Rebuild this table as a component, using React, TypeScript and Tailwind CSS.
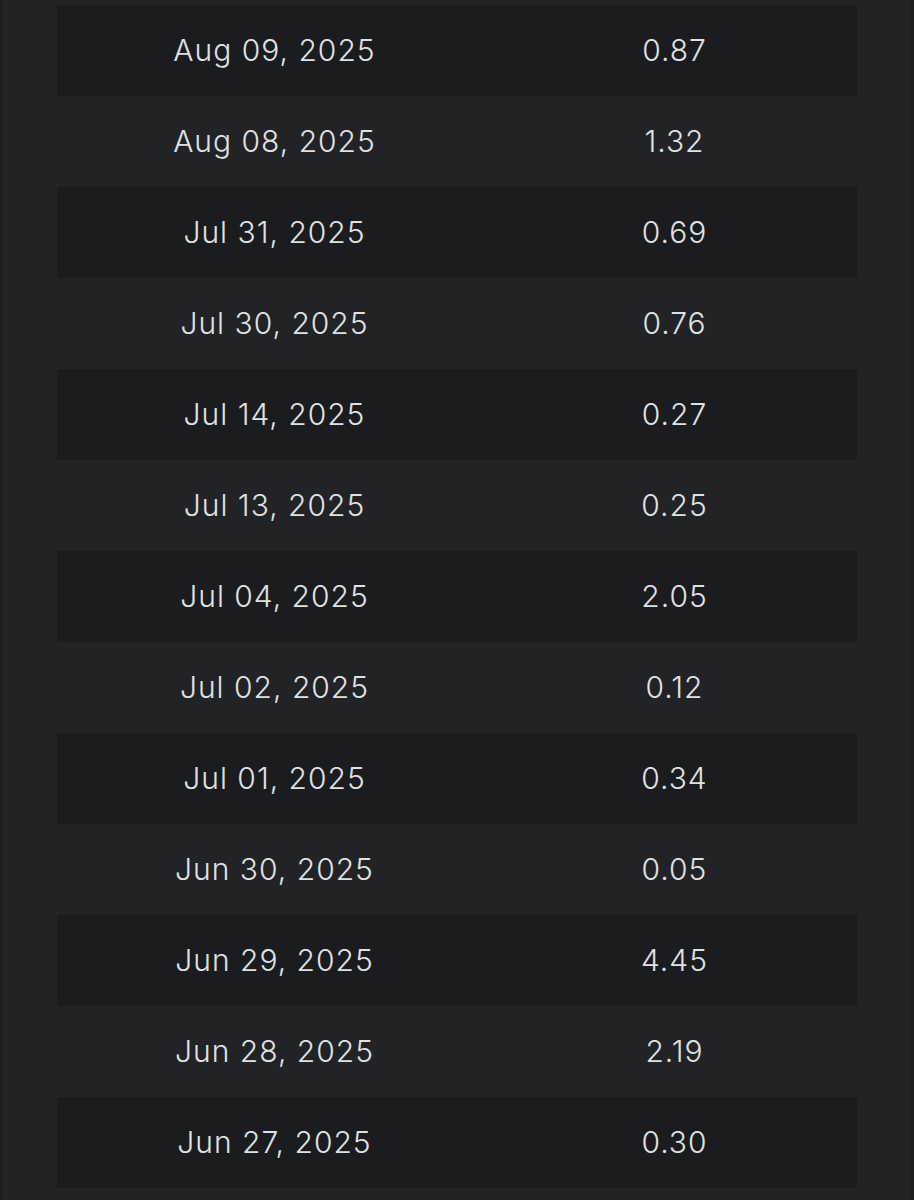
const rows: [string, string][] = [
  ['Aug 09, 2025', '0.87'],
  ['Aug 08, 2025', '1.32'],
  ['Jul 31, 2025', '0.69'],
  ['Jul 30, 2025', '0.76'],
  ['Jul 14, 2025', '0.27'],
  ['Jul 13, 2025', '0.25'],
  ['Jul 04, 2025', '2.05'],
  ['Jul 02, 2025', '0.12'],
  ['Jul 01, 2025', '0.34'],
  ['Jun 30, 2025', '0.05'],
  ['Jun 29, 2025', '4.45'],
  ['Jun 28, 2025', '2.19'],
  ['Jun 27, 2025', '0.30'],
];

export default function App() {
  return (
    <div className="min-h-[1200px] w-[914px] bg-[#1c1e21] px-[3px]">
      <div className="min-h-[1200px] bg-[#212326] px-[54px] pt-[5px] font-['Inter',sans-serif] text-[#e0e1e3]">
        <div className="w-[800px]">
          {rows.map(([date, value], i) => (
            <div
              key={date}
              className={
                'grid h-[91px] grid-cols-[435px_365px] items-center text-[30px] font-light tracking-[1px] ' +
                (i % 2 === 0 ? 'bg-[#1a1c1f]' : 'bg-[#212326]')
              }
            >
              <div className="text-center">{date}</div>
              <div className="text-center">{value}</div>
            </div>
          ))}
        </div>
      </div>
    </div>
  );
}
